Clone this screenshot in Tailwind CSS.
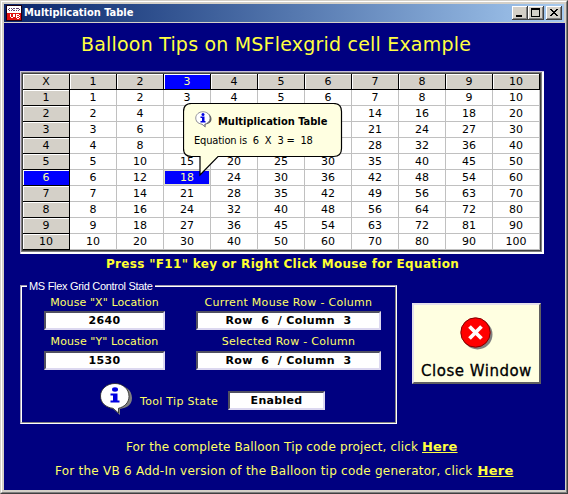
<!DOCTYPE html>
<html lang="en">
<head>
<meta charset="utf-8">
<title>Multiplication Table</title>
<script src="https://cdn.jsdelivr.net/npm/@tailwindcss/browser@4"></script>
</head>
<body class="w-[568px] h-[494px] overflow-hidden font-['DejaVu_Sans',sans-serif] bg-[#d4d0c8]">
<div class="relative flex flex-col w-[568px] h-[494px] border border-t-[#d4d0c8] border-l-[#d4d0c8] border-r-[#404040] border-b-[#404040]">
<div class="flex flex-col flex-1 border border-t-white border-l-white border-r-[#808080] border-b-[#808080] p-[2px]">

  <header class="flex items-center h-[18px] shrink-0 bg-gradient-to-r from-[#0a246a] to-[#a6caf0] pl-[2px] pr-[2px]">
    <svg class="shrink-0" width="16" height="16" viewBox="0 0 15 16" preserveAspectRatio="none" shape-rendering="crispEdges">
      <rect width="15" height="16" fill="#200010"/><rect x="1" y="1" width="13" height="7" fill="#fff"/><rect x="1" y="8" width="13" height="7" fill="#e01010"/>
      <path d="M2 4h1M3 3h1M3 5h1M5 3h1M5 5h1M6 4h1M7 3h1M7 5h1M9 3h2M9 5h1M11 3h1M12 4h1M11 5h1" transform="translate(0 .5)" stroke="#604070"/>
      <path d="M4.500 9v3M7.500 9v3M5 12.500h1M6 12.500h1M9.500 9v4M10 9.500h2M10 11.500h2M10 13.500h2M12.500 10v1M12.500 12v1" stroke="#fff" fill="none"/>
    </svg>
    <h1 class="ml-[2px] grow text-white font-bold text-[11px] leading-[18px] whitespace-nowrap font-['DejaVu_Sans_Condensed','DejaVu_Sans',sans-serif]">Multiplication Table</h1>
    <div class="flex">
      <svg width="16" height="14" shape-rendering="crispEdges"><rect width="16" height="14" fill="#404040"/><rect width="15" height="13" fill="#fff"/><rect x="1" y="1" width="14" height="12" fill="#808080"/><rect x="1" y="1" width="13" height="11" fill="#d4d0c8"/><rect x="4" y="9" width="6" height="2"/></svg>
      <svg width="16" height="14" shape-rendering="crispEdges"><rect width="16" height="14" fill="#404040"/><rect width="15" height="13" fill="#fff"/><rect x="1" y="1" width="14" height="12" fill="#808080"/><rect x="1" y="1" width="13" height="11" fill="#d4d0c8"/><path d="M3 2h9v9H3zM4 4v6h7V4z" fill-rule="evenodd"/></svg>
      <svg class="ml-[2px]" width="16" height="14" shape-rendering="crispEdges"><rect width="16" height="14" fill="#404040"/><rect width="15" height="13" fill="#fff"/><rect x="1" y="1" width="14" height="12" fill="#808080"/><rect x="1" y="1" width="13" height="11" fill="#d4d0c8"/><path d="M4 3h2v1h1v1h2V4h1V3h2v1h-1v1h-1v1H9v1h1v1h1v1h1v1h-2V9H9V8H7v1H6v1H4V9h1V8h1V7h1V6H6V5H5V4H4z"/></svg>
    </div>
  </header>

  <main class="mt-px flex-1 mr-[-1px] bg-[#000080] flex flex-col pl-4 text-[#ffff66]">
    <h2 class="h-[48px] pt-[8px] pl-[61px] text-[19px] leading-[26px] whitespace-nowrap text-[#ffff40] tracking-[0.2px]">Balloon Tips on MSFlexgrid cell Example</h2>

    <div class="w-[524px] h-[183px] shrink-0 bg-white border-t border-l border-[#c8c0dc]">
      <div class="w-[521px] h-[180px] border-t border-l border-[#808080] border-r border-b">
        <div class="w-[519px] h-[178px] border border-[#404040]">
          <div id="grid" class="grid grid-cols-[repeat(11,47px)] auto-rows-[16px] text-[11px] leading-[16px] text-center text-black"></div>
        </div>
      </div>
    </div>

    <p class="h-[31px] pt-[2px] pl-[86px] font-bold text-[12px] leading-[16px] whitespace-nowrap text-[#ffff30] tracking-[0.32px]">Press "F11" key or Right Click Mouse for Equation</p>

    <div class="flex">
      <section class="relative w-[377px] h-[139px] border border-t-[#a09cb0] border-l-[#a09cb0] border-r-white border-b-white">
        <div class="h-full w-full border border-t-white border-l-white border-r-[#808080] border-b-[#808080] text-[11px] pl-[22px] pt-[8px]">
          <div class="grid grid-cols-[121px_185px] gap-x-[31px] text-center whitespace-nowrap">
            <div class="h-[16px] leading-[16px] tracking-[0.1px]">Mouse "X" Location</div>
            <div class="h-[16px] leading-[16px] tracking-[0.3px]">Current Mouse Row - Column</div>
            <div class="h-[19px] bg-white border-2 border-t-[#505060] border-l-[#505060] border-r-[#dcd8f0] border-b-[#dcd8f0] text-black font-bold leading-[16px] tracking-[0.3px]">2640</div>
            <div class="h-[19px] bg-white border-2 border-t-[#505060] border-l-[#505060] border-r-[#dcd8f0] border-b-[#dcd8f0] text-black font-bold leading-[16px] tracking-[0.38px] whitespace-pre">Row  6  / Column  3</div>
            <div class="h-[21px] leading-[23px] tracking-[0.1px]">Mouse "Y" Location</div>
            <div class="h-[21px] leading-[23px] tracking-[0.3px]">Selected Row - Column</div>
            <div class="h-[19px] bg-white border-2 border-t-[#505060] border-l-[#505060] border-r-[#dcd8f0] border-b-[#dcd8f0] text-black font-bold leading-[16px] tracking-[0.3px]">1530</div>
            <div class="h-[19px] bg-white border-2 border-t-[#505060] border-l-[#505060] border-r-[#dcd8f0] border-b-[#dcd8f0] text-black font-bold leading-[16px] tracking-[0.38px] whitespace-pre">Row  6  / Column  3</div>
          </div>
          <div class="flex pt-[12px] pl-[55px]">
            <svg width="34" height="34" viewBox="0 0 34 34">
              <path d="M17 3C26 3 33 8 33 16S26 26 21 27V33L14 27C7 25 2 22 2 16S9 3 17 3Z" fill="#808080"/>
              <path d="M16 1.500C24 1.500 30 7 30 14.500C30 21 25 25 19.500 26.300V31L14 26.300C7 25.500 1.500 21 1.500 14S8 1.500 16 1.500Z" fill="#fff" stroke="#202020" stroke-width=".8"/>
              <path d="M11.500 11.500H18.500V18.500H20.500V20.500H11.500V18.500H14V13.500H11.500Z" fill="#0000e0"/><ellipse cx="16" cy="7.500" rx="3" ry="2.200" fill="#0000e0"/>
            </svg>
            <span class="ml-[7px] mt-[11px] w-[88px] leading-[17px] whitespace-nowrap tracking-[0.3px]">Tool Tip State</span>
            <div class="mt-[9px] w-[97px] h-[19px] bg-white border-2 border-t-[#505060] border-l-[#505060] border-r-[#dcd8f0] border-b-[#dcd8f0] text-black font-bold text-center leading-[16px] tracking-[0.3px]">Enabled</div>
          </div>
        </div>
        <span class="absolute left-[6px] top-[-8px] bg-[#000080] px-[2px] text-white text-[11px] leading-[16px] whitespace-nowrap font-['Liberation_Sans',sans-serif] tracking-[-0.3px]">MS Flex Grid Control State</span>
      </section>

      <button class="ml-[15px] mt-[18px] w-[129px] h-[81px] bg-[#ffffe1] border-2 border-t-[#e4e0ec] border-l-[#e4e0ec] border-r-[#606060] border-b-[#606060] flex flex-col items-center text-black pt-[11px]">
        <svg class="mr-[2px] shrink-0" width="34" height="34" viewBox="0 0 34 34"><circle cx="18.500" cy="18.500" r="15" fill="#808080"/><circle cx="16.500" cy="16.500" r="14.700" fill="#f00" stroke="#800000"/><path d="M10.500 10.500L22.500 22.500M22.500 10.500L10.500 22.500" stroke="#fff" stroke-width="3.800"/></svg>
        <span class="mt-[12px] text-[15px] leading-[19px] whitespace-nowrap tracking-[0.5px] [-webkit-text-stroke:0.3px_black]">Close Window</span>
      </button>
    </div>

    <p class="mt-[14px] pl-[106px] text-[12px] leading-[18px] whitespace-nowrap tracking-[0.15px]">For the complete Balloon Tip code project, click <a class="font-bold underline text-[13px] text-[#ffff40]">Here</a></p>
    <p class="mt-[6px] pl-[35px] text-[12px] leading-[18px] whitespace-nowrap tracking-[0.24px]">For the VB 6 Add-In version of the Balloon tip code generator, click <a class="ml-[1px] font-bold underline text-[13px] text-[#ffff40]">Here</a></p>
  </main>
</div>

<aside class="absolute left-[182px] top-[102px] w-[160px] h-[74px] text-black whitespace-nowrap">
  <svg class="absolute inset-0" width="160" height="74" viewBox="0 0 160 74"><path d="M8.500.5H150.500Q158.500.5 158.500 8.500V45.500Q158.500 53.500 150.500 53.500H35L17 72V53.500H8.500Q.5 53.500 .5 45.500V8.500Q.5.5 8.500.5Z" fill="#ffffe1" stroke="#000" stroke-width="1.200"/></svg>
  <div class="relative flex pl-[12px] pt-[8px]">
    <svg width="17" height="17" viewBox="0 0 34 34"><path d="M17 3C26 3 33 8 33 16S26 26 21 27V33L14 27C7 25 2 22 2 16S9 3 17 3Z" fill="#606060"/><path d="M16 1.500C24 1.500 30 7 30 14.500C30 21 25 25 19.500 26.300V31L14 26.300C7 25.500 1.500 21 1.500 14S8 1.500 16 1.500Z" fill="#fff" stroke="#707080" stroke-width="1.500"/><path d="M11 11H19V20H21V23H11V20H14V14H11Z" fill="#0000e0"/><circle cx="16" cy="7" r="3" fill="#0000e0"/></svg>
    <b class="ml-[6px] mt-[3px] text-[11px] leading-[16px] font-['DejaVu_Sans_Condensed','DejaVu_Sans',sans-serif]">Multiplication Table</b>
  </div>
  <p class="relative pl-[11px] mt-[3px] text-[11px] leading-[16px] whitespace-pre font-['DejaVu_Sans_Condensed','DejaVu_Sans',sans-serif] tracking-[-0.18px]">Equation is  6  X  3 =  18</p>
</aside>
</div>
<script>
const grid = document.getElementById('grid');
const head = 'bg-[#d4d0c8] border-r border-b border-r-black border-b-black shadow-[inset_1px_1px_0_#fff]';
const headSel = 'bg-[#0000ff] text-[#ffffa0] border-r border-b border-r-black border-b-black shadow-[inset_1px_1px_0_#fff]';
const cell = 'bg-white border-r border-b border-[#c0c0c0]';
const cellSel = 'bg-[#0000ff] text-[#ffffa0] border-r border-b border-[#c0c0c0] shadow-[inset_0_0_0_1px_#e8e8d0]';
// Cells that lie wholly behind the balloon stay empty.
const covered = (r, c) => r >= 2 && r <= 4 && c >= 3 && c <= 6;
for (let r = 0; r <= 10; r++) for (let c = 0; c <= 10; c++) {
  const d = document.createElement('div');
  d.textContent = covered(r, c) ? '' : r && c ? r * c : (r || c || 'X');
  if (r && c) d.className = r === 6 && c === 3 ? cellSel : cell;
  else d.className = (r === 6 && !c) || (c === 3 && !r) ? headSel : head;
  grid.append(d);
}
</script>
</body>
</html>
